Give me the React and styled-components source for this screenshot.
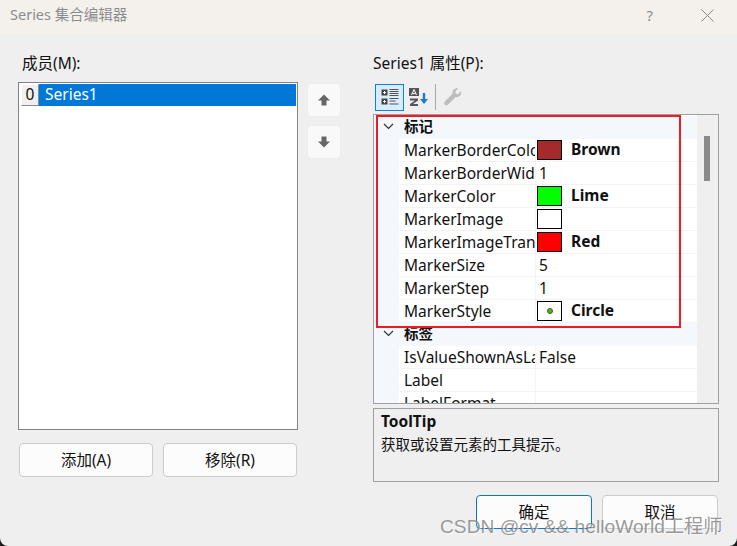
import React from 'react'
import styled, { createGlobalStyle } from 'styled-components'

const GlobalStyle = createGlobalStyle`
    html, body {
        margin: 0;
        padding: 0;
        background: #1c1c1c;
    }
    * { box-sizing: border-box; }
`

const FONT = `"Noto Sans", "Noto Sans CJK SC", sans-serif`

const sections = [
    {
        title: '标记',
        rows: [
            { name: 'MarkerBorderColor', color: '#a52a2a', value: 'Brown' },
            { name: 'MarkerBorderWidth', text: '1' },
            { name: 'MarkerColor', color: '#00ff00', value: 'Lime' },
            { name: 'MarkerImage', color: '#ffffff' },
            { name: 'MarkerImageTransparentColor', color: '#ff0000', value: 'Red' },
            { name: 'MarkerSize', text: '5' },
            { name: 'MarkerStep', text: '1' },
            { name: 'MarkerStyle', dot: true, value: 'Circle' },
        ],
    },
    {
        title: '标签',
        rows: [
            { name: 'IsValueShownAsLabel', text: 'False' },
            { name: 'Label' },
            { name: 'LabelFormat' },
        ],
    },
]

function ArrowIcon({ down }) {
    return (
        <svg width="14" height="14" viewBox="0 0 14 14" style={down ? { transform: 'scaleY(-1)' } : undefined}>
            <path d="M7 1.5 L13 7.5 H9.5 V12.5 H4.5 V7.5 H1 Z" fill="#666" />
        </svg>
    )
}

function CategoryIcon() {
    return (
        <svg width="20" height="20" viewBox="0 0 20 20">
            <rect x="1.5" y="2.5" width="6" height="6" fill="#444" />
            <rect x="1.5" y="11.5" width="6" height="6" fill="#444" />
            <path d="M3 5.5h3M4.5 4v3M3 14.5h3M4.5 13v3" stroke="#fff" strokeWidth="1" />
            <path d="M9.5 2.5h9M9.5 4.5h9M9.5 6.5h9M9.5 8.5h9M9.5 11.5h9M9.5 14h6M9.5 17h9" stroke="#555" strokeWidth="1" />
        </svg>
    )
}

function SortIcon() {
    return (
        <svg width="22" height="20" viewBox="0 0 22 20">
            <rect x="1" y="1" width="10" height="8" fill="#555" />
            <path d="M6 2.5 L3.5 8 M6 2.5 L8.5 8 M4.5 6.5h3" stroke="#fff" strokeWidth="1" fill="none" />
            <path d="M2 11.5h8v2l-5 3.5h5v2H2v-2l5-3.5H2z" fill="#555" />
            <path d="M16 6v9" stroke="#1a7ad4" strokeWidth="2.4" />
            <path d="M12 12h8l-4 5z" fill="#1a7ad4" />
        </svg>
    )
}

function WrenchIcon() {
    return (
        <svg width="20" height="20" viewBox="0 0 22 22">
            <path d="M20 4.5 L16.5 8 L14 7.5 L13.5 5 L17 1.5 C13.5 .5 10 3 10.5 7.5 L2.5 15.5 C1 17 1 18.5 2 19.5 C3 20.5 4.5 20.5 6 19 L14 11 C18 12 21 8.5 20 4.5 Z" fill="#bdbdbd" />
        </svg>
    )
}

function PropertyRow({ row }) {
    return (
        <Row>
            <Gutter />
            <NameCell>{row.name}</NameCell>
            <ValueCell>
                {row.color && <Swatch $color={row.color} />}
                {row.dot && <Swatch $color="#ffffff"><Dot /></Swatch>}
                {row.value && <BoldValue>{row.value}</BoldValue>}
                {row.text && <PlainValue>{row.text}</PlainValue>}
            </ValueCell>
        </Row>
    )
}

export default function App() {
    return (
        <Window>
            <GlobalStyle />
            <TitleBar>
                <Title>Series 集合编辑器</Title>
                <TitleControls>
                    <HelpMark>?</HelpMark>
                    <svg width="13" height="13" viewBox="0 0 13 13">
                        <path d="M.5 .5 L12.5 12.5 M12.5 .5 L.5 12.5" stroke="#8a8a8a" strokeWidth="1" />
                    </svg>
                </TitleControls>
            </TitleBar>
            <Body>
                <LeftColumn>
                    <FieldLabel $indent={4}>成员(M):</FieldLabel>
                    <MemberList>
                        <MemberRow>
                            <MemberIndex>0</MemberIndex>
                            <MemberName>Series1</MemberName>
                        </MemberRow>
                    </MemberList>
                    <ButtonRow>
                        <DialogButton $width={134}>添加(A)</DialogButton>
                        <DialogButton $width={134}>移除(R)</DialogButton>
                    </ButtonRow>
                </LeftColumn>
                <MoveColumn>
                    <MoveButton><ArrowIcon /></MoveButton>
                    <MoveButton><ArrowIcon down /></MoveButton>
                </MoveColumn>
                <RightColumn>
                    <FieldLabel>Series1 属性(P):</FieldLabel>
                    <Toolbar>
                        <ToolButton $active><CategoryIcon /></ToolButton>
                        <ToolButton><SortIcon /></ToolButton>
                        <ToolDivider />
                        <ToolButton><WrenchIcon /></ToolButton>
                    </Toolbar>
                    <PropertyGrid>
                        <GridContent>
                            {sections.map((section) => (
                                <React.Fragment key={section.title}>
                                    <SectionRow>
                                        <Chevron width="11" height="7" viewBox="0 0 11 7">
                                            <path d="M1 1 L5.5 5.5 L10 1" fill="none" stroke="#333" strokeWidth="1.2" />
                                        </Chevron>
                                        <SectionTitle>{section.title}</SectionTitle>
                                    </SectionRow>
                                    {section.rows.map((row) => <PropertyRow key={row.name} row={row} />)}
                                </React.Fragment>
                            ))}
                        </GridContent>
                        <ScrollTrack><ScrollThumb /></ScrollTrack>
                        <Highlight />
                    </PropertyGrid>
                    <DescriptionBox>
                        <DescriptionTitle>ToolTip</DescriptionTitle>
                        <DescriptionText>获取或设置元素的工具提示。</DescriptionText>
                    </DescriptionBox>
                    <Footer>
                        <DialogButton $width={116} $primary>确定</DialogButton>
                        <DialogButton $width={116}>取消</DialogButton>
                    </Footer>
                </RightColumn>
            </Body>
            <Watermark>CSDN @cv &amp;&amp; helloWorld工程师</Watermark>
        </Window>
    )
}

const Window = styled.div`
    position: relative;
    width: 737px;
    height: 546px;
    overflow: hidden;
    background: #efefef;
    border-radius: 0 0 8px 8px;
    font-family: ${FONT};
    font-size: 15px;
    color: #111;
`

const TitleBar = styled.div`
    height: 34px;
    display: flex;
    align-items: center;
    justify-content: space-between;
    padding: 0 23px 4px 10px;
    background: #f4f1ed;
`

const Title = styled.div`
    margin-bottom: 3px;
    font-size: 14.5px;
    color: #8c8c8c;
`

const TitleControls = styled.div`
    display: flex;
    align-items: center;
    gap: 48px;
`

const HelpMark = styled.span`
    font-size: 15px;
    color: #8a8a8a;
`

const Body = styled.div`
    display: flex;
    padding: 20px 0 0 18px;
`

const LeftColumn = styled.div`
    width: 280px;
    display: flex;
    flex-direction: column;
`

const FieldLabel = styled.div`
    height: 20px;
    line-height: 18px;
    padding-left: ${(p) => p.$indent || 0}px;
    font-size: 15.5px;
    white-space: nowrap;
`

const MemberList = styled.div`
    margin-top: 8px;
    height: 348px;
    padding: 1px;
    background: #fff;
    border: 1px solid #82828c;
`

const MemberRow = styled.div`
    display: flex;
    height: 22px;
    background: #0078d7;
    margin-left: 1px;
`

const MemberIndex = styled.div`
    width: 18px;
    height: 22px;
    padding-bottom: 2px;
    display: flex;
    align-items: center;
    justify-content: center;
    background: #f0f0f0;
    border: 1px solid;
    border-color: #fff #8a8a8a #8a8a8a #fff;
    font-size: 15.5px;
`

const MemberName = styled.div`
    padding-left: 6px;
    line-height: 21px;
    color: #fff;
    font-size: 15.5px;
`

const ButtonRow = styled.div`
    display: flex;
    gap: 10px;
    margin: 13px 0 0 1px;
`

const DialogButton = styled.button`
    width: ${(p) => p.$width}px;
    height: 34px;
    padding: 0 0 2px;
    font-family: ${FONT};
    font-size: 15.5px;
    color: #111;
    background: #fcfcfc;
    border: 1px solid ${(p) => (p.$primary ? '#0a78d2' : '#cbcbcb')};
    border-radius: 4px;
`

const MoveColumn = styled.div`
    width: 75px;
    padding: 29px 0 0 9px;
    display: flex;
    flex-direction: column;
    gap: 8px;
`

const MoveButton = styled.div`
    width: 34px;
    height: 34px;
    display: flex;
    align-items: center;
    justify-content: center;
    background: #f9f9f9;
    border: 1px solid #ececec;
    border-radius: 4px;
`

const RightColumn = styled.div`
    width: 346px;
    display: flex;
    flex-direction: column;
`

const Toolbar = styled.div`
    margin: 10px 0 4px 2px;
    height: 26px;
    display: flex;
    align-items: center;
`

const ToolButton = styled.div`
    width: 29px;
    height: 27px;
    display: flex;
    align-items: center;
    justify-content: center;
    background: ${(p) => (p.$active ? '#d8ecfb' : 'transparent')};
    border: 1px solid ${(p) => (p.$active ? '#0a84e0' : 'transparent')};
`

const ToolDivider = styled.div`
    width: 1px;
    height: 26px;
    margin: 0 2px;
    background: #a8a8a8;
`

const PropertyGrid = styled.div`
    position: relative;
    height: 290px;
    display: flex;
    background: #efefef;
    border: 1px solid #a0a0a0;
    overflow: hidden;
`

const GridContent = styled.div`
    width: 323px;
    padding-top: 1px;
    background: #fff;
`

const SectionRow = styled.div`
    height: 23px;
    padding-bottom: 2px;
    display: flex;
    align-items: center;
    background: #f4f7fc;
`

const Chevron = styled.svg`
    margin-left: 9px;
`

const SectionTitle = styled.div`
    margin: 0 0 2px 10px;
    font-size: 14.5px;
    font-weight: 700;
`

const Row = styled.div`
    height: 23px;
    display: flex;
`

const Gutter = styled.div`
    width: 25px;
    background: #f4f7fc;
`

const NameCell = styled.div`
    width: 137px;
    padding-left: 5px;
    line-height: 22px;
    overflow: hidden;
    white-space: nowrap;
    font-size: 15.5px;
    border-bottom: 1px solid #f3f3f3;
    border-right: 1px solid #f3f3f3;
`

const ValueCell = styled.div`
    flex: 1;
    display: flex;
    align-items: center;
    padding: 0 0 1px 1px;
    border-bottom: 1px solid #f3f3f3;
`

const Swatch = styled.div`
    width: 25px;
    height: 20px;
    display: flex;
    align-items: center;
    justify-content: center;
    background: ${(p) => p.$color};
    border: 1px solid #000;
`

const Dot = styled.span`
    width: 6px;
    height: 6px;
    border-radius: 50%;
    background: #00e000;
    border: 1px solid #a52a2a;
`

const BoldValue = styled.span`
    margin: 0 0 2px 9px;
    font-size: 15.5px;
    font-weight: 700;
`

const PlainValue = styled.span`
    margin-left: 2px;
    font-size: 15.5px;
`

const ScrollTrack = styled.div`
    flex: 1;
    padding: 21px 0 0 7px;
    background: #efefef;
`

const ScrollThumb = styled.div`
    width: 6px;
    height: 45px;
    background: #8a8a8a;
`

const Highlight = styled.div`
    position: absolute;
    left: 2px;
    top: 0;
    width: 305px;
    height: 213px;
    border: 2px solid #ed1c24;
    pointer-events: none;
`

const DescriptionBox = styled.div`
    margin-top: 4px;
    height: 74px;
    padding: 0 7px;
    border: 1px solid #a0a0a0;
`

const DescriptionTitle = styled.div`
    height: 24px;
    line-height: 24px;
    font-size: 15.5px;
    font-weight: 700;
`

const DescriptionText = styled.div`
    line-height: 22px;
    font-size: 14.5px;
`

const Footer = styled.div`
    margin: 13px 0 0 103px;
    display: flex;
    gap: 10px;
`

const Watermark = styled.div`
    position: absolute;
    left: 440px;
    top: 515px;
    font-family: "Liberation Sans", "Noto Sans CJK SC", sans-serif;
    font-size: 19.2px;
    line-height: 24px;
    white-space: nowrap;
    color: rgba(120, 120, 120, 0.75);
    text-shadow: 1px 1px 1px rgba(255, 255, 255, 0.7);
    pointer-events: none;
`
